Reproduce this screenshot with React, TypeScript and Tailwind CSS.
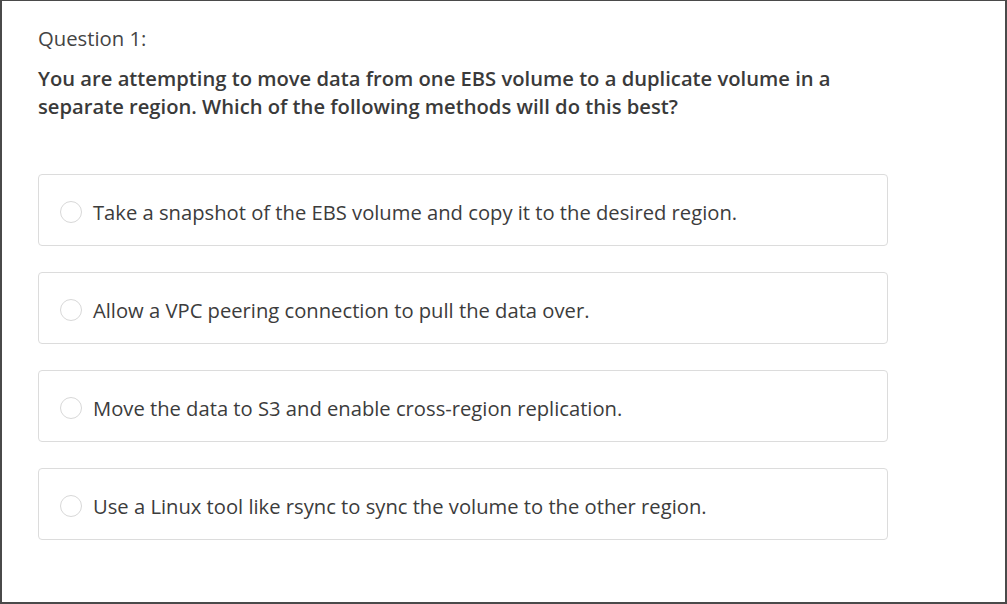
import React from "react";

const options = [
  "Take a snapshot of the EBS volume and copy it to the desired region.",
  "Allow a VPC peering connection to pull the data over.",
  "Move the data to S3 and enable cross-region replication.",
  "Use a Linux tool like rsync to sync the volume to the other region.",
];

export default function App() {
  return (
    <div
      className="h-[604px] w-[1007px] bg-white border-t border-l-2 border-r-2 border-b-2 border-[#4a4a4a] text-[#3a3a3a] overflow-hidden"
      style={{ fontFamily: '"Open Sans", "Liberation Sans", sans-serif' }}
    >
      <div className="pl-[36px] pt-[23px]">
        <div className="text-[20.3px] leading-[28px] text-[#444]">Question 1:</div>
        <div className="mt-[12px] text-[20.2px] leading-[28px] font-semibold text-[#3a3a3a] w-[860px]">
          You are attempting to move data from one EBS volume to a duplicate volume in a separate region. Which of the following methods will do this best?
        </div>
        <div className="mt-[54px] flex flex-col gap-[26px] w-[850px]">
          {options.map((o) => (
            <div
              key={o}
              className="h-[72px] border border-[#dcdcdc] rounded-[4px] flex items-center pl-[21px] pt-[3px]"
            >
              <span className="w-[22px] h-[22px] rounded-full border border-[#d8d8d8] shrink-0" />
              <span className="ml-[11px] text-[20.2px] leading-[28px] text-[#3c3c3c]">{o}</span>
            </div>
          ))}
        </div>
      </div>
    </div>
  );
}
